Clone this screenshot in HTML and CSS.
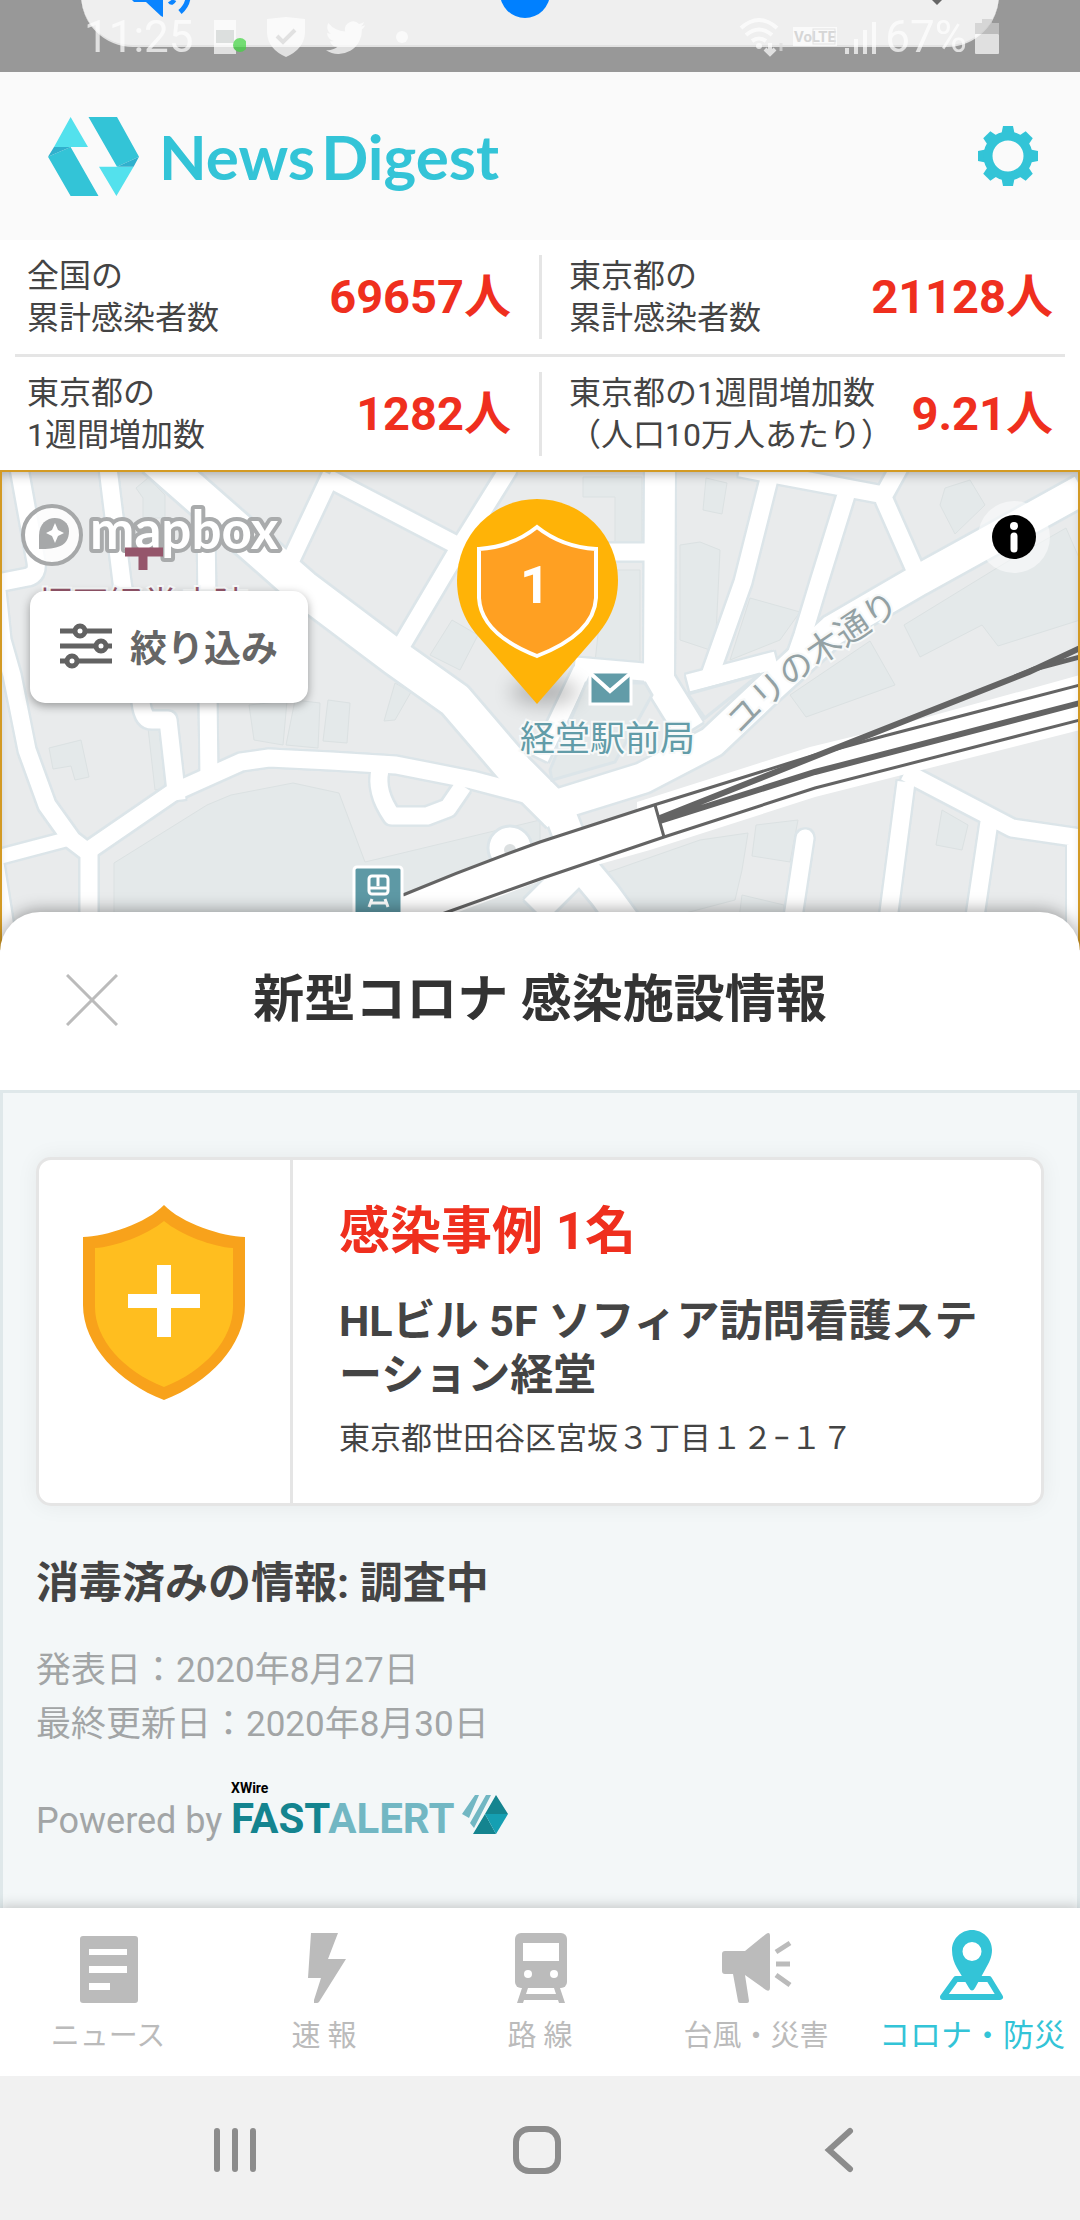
FILE: index.html
```html
<!DOCTYPE html>
<html lang="ja">
<head>
  <meta charset="UTF-8" />
  <meta name="viewport" content="width=device-width, initial-scale=1" />
  <title>NewsDigest</title>
  <link rel="stylesheet" href="styles.css">
</head>
<body>

  <div class="status-bar">
    <div class="volume-panel">
      <svg class="volume-icon" width="60" height="20" viewBox="0 0 60 20">
        <path d="M0 0H31V17L29 16L14 2H2Z" fill="#0a84ff" />
        <path d="M38 1Q40 4 42 0M48 12Q55 6 56 -2" fill="none" stroke="#0a84ff" stroke-width="5" />
      </svg>
      <svg class="volume-thumb" width="50" height="20" viewBox="0 0 50 20">
        <circle cx="25" cy="-7" r="25" fill="#0080ff" />
      </svg>
      <svg class="volume-more" width="10" height="6" viewBox="0 0 10 6"><path d="M0 0H10L5 5Z" fill="#666" /></svg>
    </div>
    <div class="status-group">
      <span class="status-text">11:25</span>
      <svg width="32" height="40" viewBox="0 0 32 40">
        <path d="M0 3H22V37H0Z" fill="#fff" />
        <path d="M2 13H20V26H2Z" fill="#d5d9d8" />
        <circle cx="26" cy="28" r="7" fill="#3fd63f" />
      </svg>
      <svg width="40" height="42" viewBox="0 0 40 42">
        <path d="M20 1Q30 2 39 3V17Q38 33 20 41Q2 33 1 17V3Q10 2 20 1Z" fill="#fff" />
        <path d="M11 20L17 26L29 14" fill="none" stroke="#dcdcdc" stroke-width="4" />
      </svg>
      <svg width="40" height="40" viewBox="0 0 24 24">
        <path d="M23.6 4.9a9.600 9.600 0 0 1-2.800.8 4.900 4.900 0 0 0 2.100-2.700 9.800 9.800 0 0 1-3.100 1.200 4.900 4.900 0 0 0-8.300 4.500A13.900 13.900 0 0 1 1.400 3.600a4.900 4.900 0 0 0 1.500 6.500 4.900 4.900 0 0 1-2.200-.6 4.900 4.900 0 0 0 3.900 4.900 4.900 4.900 0 0 1-2.200.1 4.900 4.900 0 0 0 4.600 3.400A9.900 9.900 0 0 1 0 19.900a13.900 13.900 0 0 0 21.500-12.400 10 10 0 0 0 2.100-2.600z" fill="#fff" />
      </svg>
      <span class="status-dot"></span>
    </div>
    <div class="status-group status-right">
      <svg width="46" height="40" viewBox="0 0 46 40">
        <path d="M2 11Q20 -5 38 11M7 18Q20 7 33 18M13 24Q20 19 27 24" fill="none" stroke="#fff" stroke-width="4" />
        <circle cx="20" cy="29" r="3" fill="#fff" />
        <path d="M31 26V36M26 32L31 37L36 32" fill="none" stroke="#fff" stroke-width="4" />
        <path d="M42 34V26" stroke="#ddd" stroke-width="3" />
      </svg>
      <svg width="44" height="40" viewBox="0 0 44 40">
        <rect x="0" y="10" width="44" height="19" fill="#fff" />
        <text x="22" y="25" text-anchor="middle" class="volte">VoLTE</text>
        <rect x="20" y="12" width="22" height="15" fill="none" stroke="#ddd" />
      </svg>
      <svg width="32" height="40" viewBox="0 0 32 40">
        <path d="M2 31V37M11 22V37M20 13V37M29 5V37" stroke="#fff" stroke-width="4" />
      </svg>
      <span class="status-text">67%</span>
      <svg width="24" height="40" viewBox="0 0 24 40">
        <path d="M7 2H17V6H24V17H0V6H7Z" fill="#ccc" />
        <rect x="0" y="17" width="24" height="20" rx="1" fill="#fff" />
      </svg>
    </div>
  </div>

  <header class="header">
    <a class="logo" href="#">
      <svg width="91" height="79" viewBox="0 0 91 79">
        <path d="M22.600 0L40 30H6ZM51 49.700H85.600L68.400 79Z" fill="#53e1ed" />
        <path d="M22.600 30L50.500 79H22.600L0 39.700ZM40.500 0H69L91 39.700L69 49.700Z" fill="#33c4d7" />
        <path d="M6 30H22.600L0 39.700ZM91 39.700L85.600 49.700H69Z" fill="#30b0cd" />
      </svg>
      <span class="logo-text"><span>News</span><span>Digest</span></span>
    </a>
    <button class="icon-btn" aria-label="設定">
      <svg width="60" height="60" viewBox="-30 -30 60 60">
        <defs><path id="tooth" d="M-7 -20L-5 -30H5L7 -20Z" /></defs>
        <g fill="#33c4d7">
          <use href="#tooth" />
          <use href="#tooth" transform="rotate(45)" />
          <use href="#tooth" transform="rotate(90)" />
          <use href="#tooth" transform="rotate(135)" />
          <use href="#tooth" transform="rotate(180)" />
          <use href="#tooth" transform="rotate(225)" />
          <use href="#tooth" transform="rotate(270)" />
          <use href="#tooth" transform="rotate(315)" />
        </g>
        <circle r="20" fill="none" stroke="#33c4d7" stroke-width="9" />
      </svg>
    </button>
  </header>

  <section class="stats">
    <div class="stats-row">
      <div class="stat"><p>全国の<br>累計感染者数</p><strong>69657人</strong></div>
      <div class="stat"><p>東京都の<br>累計感染者数</p><strong>21128人</strong></div>
    </div>
    <div class="stats-row">
      <div class="stat"><p>東京都の<br>1週間増加数</p><strong>1282人</strong></div>
      <div class="stat"><p>東京都の1週間増加数<br>（人口10万人あたり）</p><strong>9.21人</strong></div>
    </div>
  </section>

  <section class="map">
    <svg class="map-canvas" viewBox="2 2 1076 478" preserveAspectRatio="xMidYMin slice">
      <defs>
        <g id="roads" fill="none" stroke-linejoin="round">
          <path class="w14" d="M-5 388L75 367M-4 390L10 480M1074 375V480" />
          <path class="w17" d="M19 -2L36 92Q38 104 28 107L-2 113M-3 120L2 170L12 205L27 280L47 335L72 370L89 383V480" />
          <path class="w17" d="M108 -2L122 112L141 232Q143 250 152 250L168 250L177 330M206 50L209 310" />
          <path class="w17" d="M331 5L290 92M328 8L470 82M509 -2L458 80L400 178" />
          <path class="w17" d="M89 380L172 323L241 292L269 288L331 291L396 295L472 310L540 328" />
          <path class="w17" d="M380 300Q375 322 392 346H427L448 338L463 316" />
          <path class="w17" d="M590 82H655M540 288L582 200M575 196L655 203M688 213L776 190" />
          <path class="w17" d="M770 5L743 112L710 205M740 -2L884 25L900 -4M846 25L819 112L803 165L796 185M882 25L916 102" />
          <path class="w17" d="M906 312L884 480M905 302L1012 358L1080 368M989 352L970 480" />
          <path class="w17" stroke-linecap="round" d="M805 368L788 480" />
          <path class="w30" d="M660 -4L659 210L690 260M557 335L580 395L605 425L645 480M575 400L535 440" />
          <path class="w30" d="M1082 20L919 110L833 160L765 222L712 272L643 308L540 340" />
          <path class="w36" d="M155 -12L303 118L396 188L455 230L515 300L560 345" />
        </g>
      </defs>
      <rect width="1080" height="480" fill="#e9ebec" />

      <!-- buildings -->
      <g fill="#e4e9ea" stroke="#dbe1e2">
        <path d="M114 393L207 335L231 325L293 313L339 323L365 392L540 350V480H114Z" />
        <path d="M136 18L148 8L165 25V48H143V28ZM49 278L81 270L89 307L75 310L71 296L53 299Z" />
        <path d="M249 235L287 231L283 275L254 270ZM295 230L320 233L318 278L286 275ZM328 230L350 233L347 273L323 271Z" />
        <path d="M148 258L160 260L165 318L155 320ZM395 213L411 222L395 250L384 251Z" />
        <path d="M452 150L478 165L460 200L430 185ZM583 7H642V90H615V27H583ZM605 100H640V192H595Z" />
        <path d="M680 75L700 72L720 80L716 165L710 180L680 170ZM750 128L800 142L780 170L730 190Z" />
        <path d="M706 8L727 13L722 44L703 40ZM945 18L970 10L985 35L955 64L940 35Z" />
        <path d="M904 155L1010 90L1066 58L1080 90V150L998 176L982 155L920 187Z" />
        <path d="M790 225L870 171L895 215L806 247ZM600 405L700 370L748 363L742 400L735 430L640 455ZM756 355L798 350L790 392L752 386Z" />
        <path d="M942 340L968 355L962 380L936 375ZM742 425L784 435L780 480H735Z" />
      </g>

      <use href="#roads" class="casing" />
      <use href="#roads" class="road" />
      <path d="M550 300L586 213L645 213L652 225L615 292L552 310Z" fill="#e4e9ea" stroke="#dce5e9" stroke-width="3" />
      <path d="M688 224L760 204L705 248Z" fill="#e9ebec" stroke="#dce5e9" stroke-width="3" />
      <circle cx="510" cy="378" r="22" fill="#fff" stroke="#dce5e9" stroke-width="3" />
      <circle cx="510" cy="380" r="6" fill="#dce0e1" />

      <!-- railway -->
      <path d="M403 425L540 372L637 340V332L810 277L884 259L1080 205V260L815 327L650 380L540 411L448 446L470 480H380Z" fill="#fff" />
      <g fill="none" stroke="#646464" stroke-width="3">
        <path d="M403 425Q470 397 540 372L654 335L815 285L884 266L1080 215" />
        <path d="M442 444L540 409L664 367L815 318L1080 250M655 335L664 367" />
        <path stroke-width="6" d="M660 351L815 302L1080 233M660 348L826 282L1029 202L1080 178" />
        <path stroke-width="5" d="M1015 207L1034 199L1080 187" />
      </g>

      <g class="map-label">
        <text x="38" y="147" class="hospital">堀西経堂病院</text>
        <text x="520" y="281" class="post">経堂駅前局</text>
        <path id="street" d="M741 265Q782 220 834 185T934 118" fill="none" />
        <text class="street"><textPath href="#street">ユリの木通り</textPath></text>
      </g>

      <path d="M590 202H631V234H590Z" fill="#629ca8" stroke="#fff" stroke-width="3" />
      <path d="M590 203L610 221L631 203" fill="none" stroke="#fff" stroke-width="4" />
      <rect x="354" y="397" width="48" height="50" rx="3" fill="#5e99a5" stroke="#fff" stroke-width="3" />
      <g fill="none" stroke="#fff" stroke-width="3">
        <rect x="369" y="406" width="19" height="18" rx="3" />
        <path d="M369 418H388M378 406V416M372 429L369 437M385 429L388 437M371 433H386" />
      </g>

      <!-- case pin -->
      <ellipse cx="545" cy="222" rx="34" ry="12" class="pin-shadow" />
      <path d="M537 29A81 81 0 0 1 618 110C618 136 607 153 597 165L537 234L477 165C467 153 457 136 457 110A80 81 0 0 1 537 29Z" fill="#ffb307" />
      <path d="M537 57Q562 77 596 79V128Q594 164 537 186Q481 164 479 128V79Q512 77 537 57Z" fill="#ffa022" stroke="#fff" stroke-width="4" />
      <text x="535" y="133" text-anchor="middle" class="pin-count">1</text>

      <!-- mapbox -->
      <circle cx="52" cy="65" r="29" fill="#fff" fill-opacity=".85" stroke="#a6a8a9" stroke-width="4" />
      <path d="M39 79V66C39 42 69 44 69 61C69 77 56 79 39 79Z" fill="#a6a8a9" />
      <path d="M55 53L58 60L64 63L58 66L55 73L52 66L46 63L52 60Z" fill="#fff" />
      <text x="90" y="79" class="mapbox">mapbox</text>
      <path d="M143 80V100M125 82H163" stroke="#95566b" stroke-width="9" />
    </svg>

    <button class="filter-btn">
      <svg width="52" height="46" viewBox="0 0 52 46">
        <g fill="#fff" stroke="#626262" stroke-width="5">
          <path d="M0 8H52M0 23H52M0 38H52" />
          <circle cx="20" cy="8" r="5" /><circle cx="41" cy="23" r="5" /><circle cx="12" cy="38" r="5" />
        </g>
      </svg>
      絞り込み
    </button>
    <button class="info-btn" aria-label="地図の情報">
      <svg width="44" height="44" viewBox="0 0 44 44">
        <circle cx="22" cy="22" r="22" />
        <circle cx="22" cy="11" r="4" fill="#fff" />
        <path d="M22 21V34" stroke="#fff" stroke-width="7" stroke-linecap="round" />
      </svg>
    </button>
  </section>

  <main class="sheet">
    <div class="sheet-header">
      <button class="icon-btn" aria-label="閉じる">
        <svg width="52" height="52" viewBox="0 0 52 52"><path d="M1 1L51 51M51 1L1 51" stroke="#bbb" stroke-width="3" /></svg>
      </button>
      <h1>新型コロナ 感染施設情報</h1>
    </div>

    <div class="sheet-body">
      <article class="card">
        <div class="card-icon">
          <svg width="162" height="195" viewBox="0 0 162 195">
            <path d="M81 0C98 18 140 32 162 32V100C162 140 126 178 81 195C36 178 0 140 0 100V32C22 32 64 18 81 0Z" fill="#f8a21b" />
            <path d="M81 16C98 30 130 42 150 43V102C150 134 122 166 81 182C40 166 12 134 12 102V43C32 42 64 30 81 16Z" fill="#ffbe1f" />
            <path d="M74 60H88V89H117V103H88V132H74V103H45V89H74Z" fill="#fff" />
          </svg>
        </div>
        <div class="card-text">
          <h2>感染事例 1名</h2>
          <h3>HLビル 5F ソフィア訪問看護ステーション経堂</h3>
          <p>東京都世田谷区宮坂３丁目１２−１７</p>
        </div>
      </article>

      <h3 class="disinfect">消毒済みの情報: 調査中</h3>
      <p class="dates">発表日：2020年8月27日<br>最終更新日：2020年8月30日</p>
      <div class="powered">
        <span>Powered by</span>
        <svg width="280" height="56" viewBox="0 0 280 56">
          <text x="0" y="13" class="xwire">XWire</text>
          <text x="0" y="53" class="fastalert"><tspan fill="#14848f">FAST</tspan><tspan fill="#72b7c3">ALERT</tspan></text>
          <path d="M244 15H248L238 38L231 34ZM255 15H260L243 48L239 43Z" fill="#72b7c3" />
          <path d="M265 15L277 34H254ZM254 34L265 54H242Z" fill="#14848f" />
          <path d="M254 34H277L265 54Z" fill="#159fb2" />
        </svg>
      </div>
    </div>
  </main>

  <nav class="tabs">
    <a href="#">
      <svg width="74" height="74" viewBox="0 0 74 74">
        <rect x="9" y="6" width="58" height="67" rx="3" />
        <path d="M18 19H56V25H18ZM18 36H56V43H18ZM18 53H39V60H18Z" fill="#fff" />
      </svg>
      ニュース
    </a>
    <a href="#">
      <svg width="74" height="74" viewBox="0 0 74 74">
        <path d="M24 3H51L41 29H59L32 72Q31 73 30 73H27V70L34 48H21Z" />
      </svg>
      速 報
    </a>
    <a href="#">
      <svg width="74" height="74" viewBox="0 0 74 74">
        <rect x="12" y="3" width="52" height="55" rx="6" />
        <path d="M20 13H56V31H20Z" fill="#fff" />
        <circle cx="25" cy="44" r="4" fill="#fff" /><circle cx="51" cy="44" r="4" fill="#fff" />
        <path d="M19 58H25L23 64H53L51 58H57L62 73H56L55 70H21L20 73H14Z" />
      </svg>
      路 線
    </a>
    <a href="#">
      <svg width="74" height="74" viewBox="0 0 74 74">
        <path d="M6 21H26L47 4Q51 1 51 6V58Q51 62 47 60L26 45L30 71Q30 73 28 73H21Q19 73 19 71L14 44H6Q3 44 3 41V24Q3 21 6 21Z" />
        <path d="M57 22L71 13M57 34H71M57 45L71 55" stroke="currentColor" stroke-width="5" />
      </svg>
      台風・災害
    </a>
    <a href="#" class="active">
      <svg width="74" height="74" viewBox="0 0 74 74">
        <path d="M21 49H54L65 67H8Z" fill="none" stroke="currentColor" stroke-width="6" stroke-linejoin="round" />
        <path fill-rule="evenodd" d="M37 0C48 0 57 9 57 20C57 27 54 33 51 38L40 58Q37 63 34 58L22 38C19 33 17 27 17 20C17 9 26 0 37 0ZM37 12A9 9 0 1 0 37 31A9 9 0 1 0 37 12Z" />
      </svg>
      コロナ・防災
    </a>
  </nav>

  <div class="system-nav">
    <button class="icon-btn" aria-label="履歴">
      <svg width="48" height="48" viewBox="0 0 48 48"><path d="M6 5V43M24 5V43M42 5V43" /></svg>
    </button>
    <button class="icon-btn" aria-label="ホーム">
      <svg width="48" height="48" viewBox="0 0 48 48"><rect x="3" y="3" width="42" height="42" rx="13" /></svg>
    </button>
    <button class="icon-btn" aria-label="戻る">
      <svg width="48" height="48" viewBox="0 0 48 48"><path d="M35 5L14 24L35 43" /></svg>
    </button>
  </div>

</body>
</html>
```

FILE: styles.css
```css
* {
  box-sizing: border-box;
}
body {
  margin: 0;
  min-height: 100vh;
  display: flex;
  flex-direction: column;
  font-family: Roboto, "Noto Sans CJK JP", sans-serif;
  color: #444;
  background: #fff;
}
h1, h2, h3, p {
  margin: 0;
}
svg {
  display: block;
  flex-shrink: 0;
}
button {
  font-family: inherit;
  border: none;
  cursor: pointer;
}
a {
  text-decoration: none;
}
.icon-btn {
  padding: 0;
  background: none;
}

/* status bar */
.status-bar {
  position: relative;
  height: 72px;
  display: flex;
  justify-content: space-between;
  padding: 16px 81px 0 84px;
  background: #989898;
  overflow: hidden;
}
.volume-panel {
  position: absolute;
  top: -60px;
  left: 81px;
  right: 81px;
  height: 107px;
  padding: 60px 57px 0 51px;
  display: flex;
  background: #efefef;
  border-bottom: 2px solid #e2e2e2;
  border-radius: 0 0 52px 52px;
}
.volume-thumb {
  margin: 0 auto 0 308px;
}
.status-group {
  position: relative;
  display: flex;
  align-items: center;
  gap: 20px;
  height: 42px;
  opacity: .7;
}
.status-right {
  gap: 8px;
}
.status-text {
  font-size: 44px;
  line-height: 42px;
  color: #fff;
}
.status-dot {
  width: 12px;
  height: 12px;
  margin-left: 10px;
  border-radius: 50%;
  background: #fff;
}
.volte {
  font-size: 15px;
  font-weight: 700;
  fill: #ccc;
}

/* header */
.header {
  display: flex;
  align-items: center;
  justify-content: space-between;
  height: 168px;
  padding: 0 42px 0 48px;
  background: #fafafa;
}
.logo {
  display: flex;
  align-items: center;
  gap: 20px;
  color: #33c4d7;
}
.logo-text {
  display: flex;
  gap: 6px;
  font-family: Lato, sans-serif;
  font-size: 62px;
  font-weight: 700;
  line-height: 80px;
}

/* numbers */
.stats {
  padding: 0 15px;
}
.stats-row {
  display: grid;
  grid-template-columns: 1fr 1fr;
  padding: 15px 0;
}
.stats-row + .stats-row {
  border-top: 3px solid #e5e5e5;
  padding-bottom: 14px;
}
.stat {
  display: flex;
  align-items: center;
  justify-content: space-between;
  padding: 0 12px;
  white-space: nowrap;
}
.stat + .stat {
  border-left: 3px solid #e5e5e5;
  margin-left: -1px;
  padding-left: 27px;
}
.stat:first-child {
  padding-right: 29px;
}
.stat p {
  font-size: 32px;
  line-height: 42px;
}
.stat strong {
  font-size: 47px;
  line-height: 60px;
  color: #ef2f1e;
}

/* map */
.map {
  position: relative;
  height: 480px;
  border: 2px solid #d39a24;
  border-bottom: none;
}
.map::after {
  content: "";
  position: absolute;
  inset: 0;
  box-shadow: inset 0 8px 12px -6px rgba(0, 0, 0, .3);
  pointer-events: none;
}
.map-canvas {
  width: 100%;
  height: 478px;
}
.w14 { stroke-width: 14px; }
.w17 { stroke-width: 17px; }
.w30 { stroke-width: 30px; }
.w36 { stroke-width: 35px; }
.casing {
  stroke: #dce5e9;
  filter: drop-shadow(2px 0 #dce5e9) drop-shadow(-2px 0 #dce5e9) drop-shadow(0 2px #dce5e9) drop-shadow(0 -2px #dce5e9);
}
.road {
  stroke: #fff;
}
.map-label text {
  stroke: #f7f9f9;
  stroke-width: 4px;
  paint-order: stroke;
}
.hospital {
  font-size: 35px;
  fill: #95566b;
}
.post {
  font-size: 35px;
  fill: #629ca8;
}
.street {
  font-size: 34px;
  fill: #93a1a4;
}
.pin-shadow {
  fill: #000;
  opacity: .25;
  filter: blur(10px);
}
.pin-count {
  font-size: 52px;
  font-weight: 700;
  fill: #fff;
}
.mapbox {
  font-family: Lato, sans-serif;
  font-size: 53px;
  font-weight: 700;
  fill: #fff;
  stroke: #a9abac;
  stroke-width: 8px;
  stroke-linejoin: round;
  paint-order: stroke;
}
.filter-btn {
  position: absolute;
  top: 119px;
  left: 28px;
  display: flex;
  align-items: center;
  gap: 18px;
  height: 112px;
  padding: 0 30px 2px;
  border-radius: 15px;
  background: #fff;
  box-shadow: 0 3px 10px rgba(0, 0, 0, .35);
  font-size: 37px;
  font-weight: 700;
  color: #666;
}
.info-btn {
  position: absolute;
  top: 29px;
  right: 28px;
  padding: 14px;
  border-radius: 50%;
  background: rgba(255, 255, 255, .5);
}

/* bottom sheet */
.sheet {
  position: relative;
  flex: 1;
  display: flex;
  flex-direction: column;
  margin-top: -38px;
  border-radius: 40px 40px 0 0;
  background: #fff;
  box-shadow: 0 -2px 16px rgba(0, 0, 0, .35);
}
.sheet-header {
  display: grid;
  grid-template-columns: 52px 1fr 52px;
  align-items: center;
  height: 178px;
  padding: 0 66px 2px;
}
.sheet-header h1 {
  font-size: 51px;
  line-height: 60px;
  text-align: center;
  color: #333;
}
.sheet-body {
  flex: 1;
  padding: 64px 33px 40px;
  background: #f3f7f8;
  border: 3px solid #dfe8ea;
  border-bottom: none;
}
.card {
  display: flex;
  border: 3px solid #e5e5e5;
  border-radius: 15px;
  background: #fff;
  box-shadow: 0 0 22px rgba(0, 0, 0, .06);
}
.card-icon {
  padding: 45px 45px 0 44px;
  border-right: 3px solid #e5e5e5;
}
.card-text {
  flex: 1;
  padding: 42px 46px 43px;
}
.card-text h2 {
  font-size: 51px;
  line-height: 60px;
  color: #ef2f1e;
}
.card-text h3 {
  margin: 32px 0 16px;
  font-size: 43px;
  line-height: 54px;
  line-break: anywhere;
}
.card-text p {
  font-size: 31px;
  line-height: 42px;
}
.disinfect {
  margin-top: 50px;
  font-size: 43px;
  line-height: 54px;
}
.dates {
  margin-top: 34px;
  font-size: 35px;
  line-height: 54px;
  color: #a2a5a6;
}
.powered {
  display: flex;
  align-items: flex-end;
  gap: 9px;
  margin-top: 28px;
  font-size: 36px;
  line-height: 30px;
  color: #a2a5a6;
}
.powered svg {
  overflow: visible;
}
.xwire {
  font-size: 14px;
  font-weight: 700;
  fill: #000;
}
.fastalert {
  font-size: 42px;
  font-weight: 700;
}

/* tabs */
.tabs {
  position: relative;
  display: grid;
  grid-template-columns: repeat(5, 1fr);
  height: 168px;
  background: #fff;
  box-shadow: 0 -2px 12px rgba(0, 0, 0, .2);
}
.tabs a {
  display: flex;
  flex-direction: column;
  align-items: center;
  gap: 12px;
  padding-top: 22px;
  font-size: 29px;
  line-height: 40px;
  white-space: nowrap;
  color: #bbb;
}
.tabs svg {
  fill: currentColor;
}
.tabs .active {
  font-size: 31px;
  color: #33c4d7;
}

/* android buttons */
.system-nav {
  position: relative;
  display: grid;
  grid-template-columns: repeat(3, 1fr);
  justify-items: center;
  align-items: center;
  height: 144px;
  padding: 4px 90px 0 84px;
  background: #f1f1f1;
}
.system-nav svg {
  fill: none;
  stroke: #8c8c8c;
  stroke-width: 6px;
  stroke-linecap: round;
}
```
